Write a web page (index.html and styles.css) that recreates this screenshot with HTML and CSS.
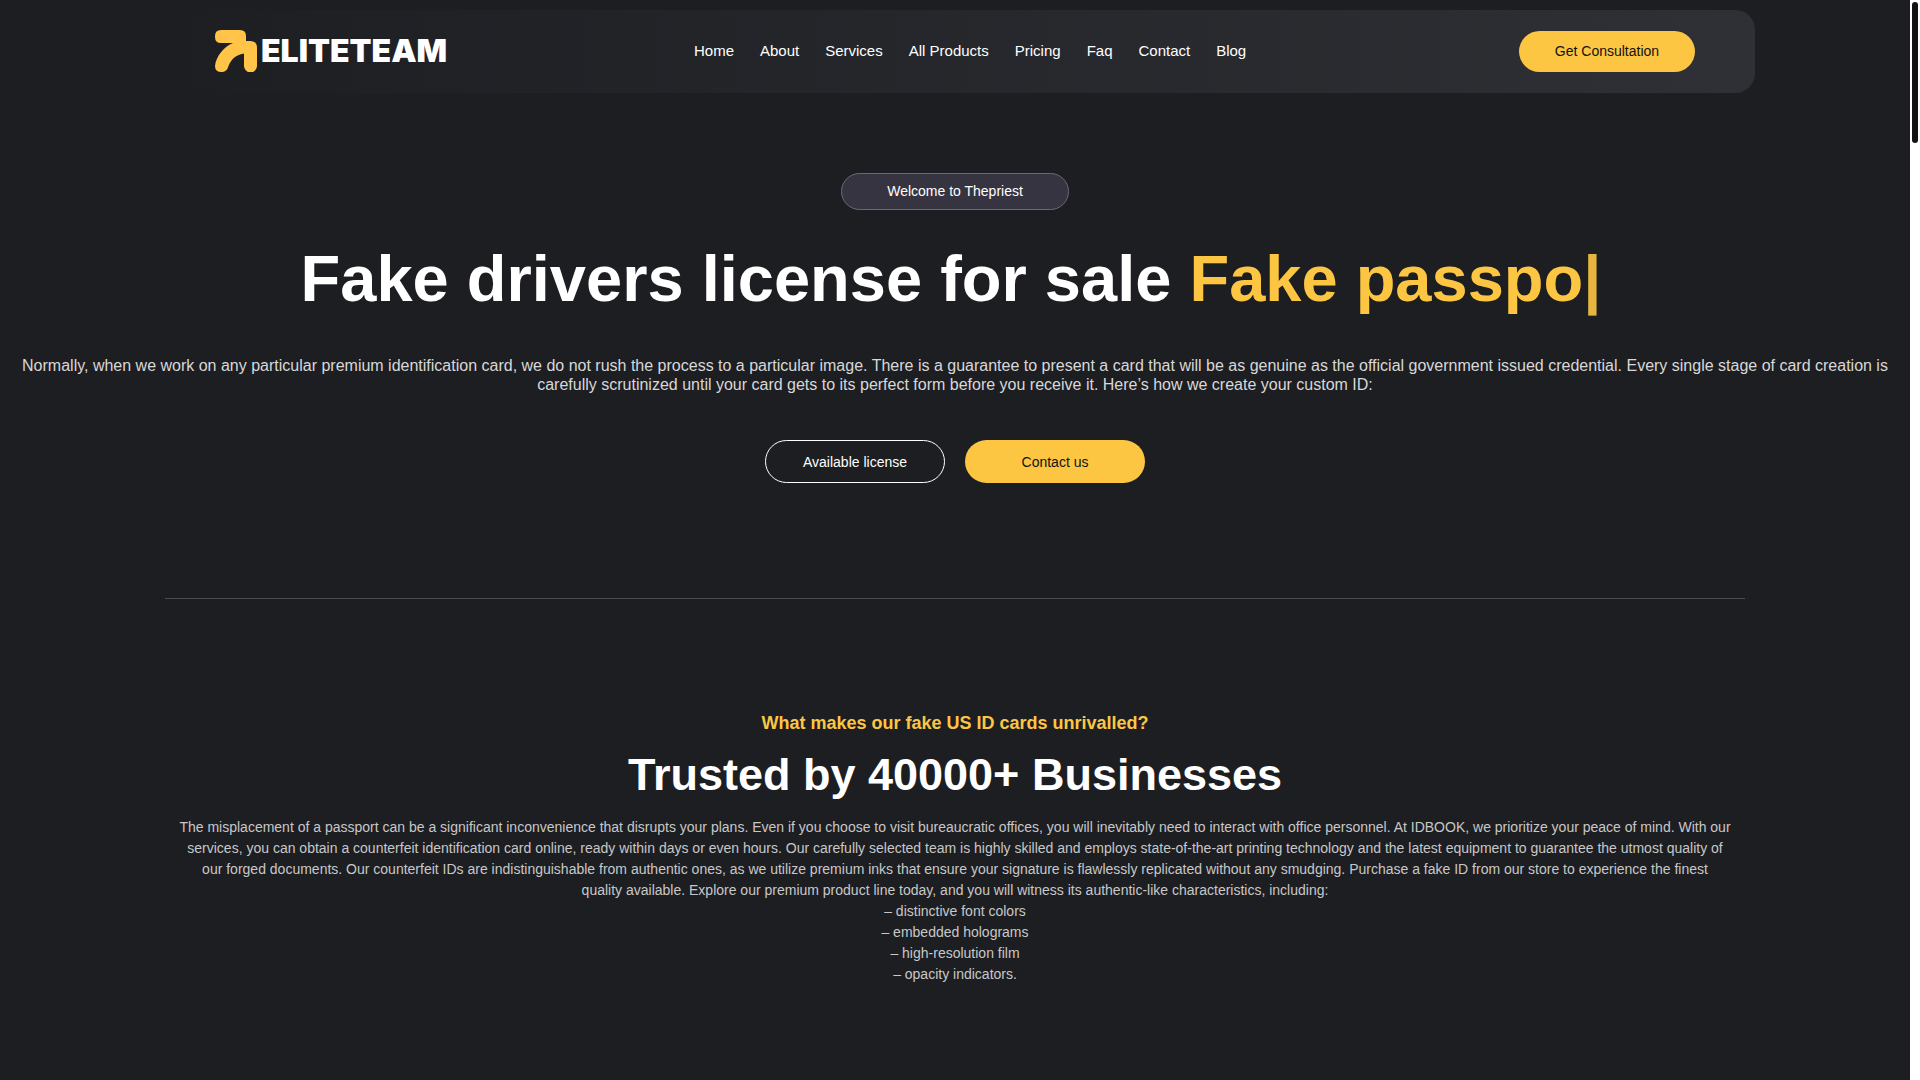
FILE: index.html
```html
<!DOCTYPE html>
<html lang="en">
<head>
    <meta charset="UTF-8">
    <meta name="viewport" content="width=device-width, initial-scale=1.0">
    <title>Eliteteam</title>
    <link rel="stylesheet" href="styles.css">
</head>
<body>
    <div class="page">
        <header class="header">
            <a href="#" class="logo">
                <svg class="logo-mark" viewBox="0 0 42 42" aria-hidden="true">
                    <path d="M6 0H25Q31 0 31 6V11H35Q42 11 42 18V36A6.3 6.3 0 0 1 29 36V23.5C20 25 16 30 13.500 36Q12 42 6.500 42Q0 42 0 36C1 27 8 17 18 13H6Q0 13 0 7V6Q0 0 6 0Z" fill="#ffc448"/>
                </svg>
                <span class="logo-text">ELITETEAM</span>
            </a>
            <nav class="nav">
                <a href="#">Home</a>
                <a href="#">About</a>
                <a href="#">Services</a>
                <a href="#">All Products</a>
                <a href="#">Pricing</a>
                <a href="#">Faq</a>
                <a href="#">Contact</a>
                <a href="#">Blog</a>
            </nav>
            <a href="#" class="btn btn-small">Get Consultation</a>
        </header>

        <main>
            <section class="hero">
                <span class="badge">Welcome to Thepriest</span>
                <h1>Fake drivers license for sale <span class="typed">Fake passpo<span class="cursor">|</span></span></h1>
                <p>Normally, when we work on any particular premium identification card, we do not rush the process to a particular image. There is a guarantee to present a card that will be as genuine as the official government issued credential. Every single stage of card creation is carefully scrutinized until your card gets to its perfect form before you receive it. Here’s how we create your custom ID:</p>
                <div class="hero-buttons">
                    <a href="#" class="btn btn-outline">Available license</a>
                    <a href="#" class="btn">Contact us</a>
                </div>
            </section>

            <section class="trusted">
                <h3>What makes our fake US ID cards unrivalled?</h3>
                <h2>Trusted by 40000+ Businesses</h2>
                <p>The misplacement of a passport can be a significant inconvenience that disrupts your plans. Even if you choose to visit bureaucratic offices, you will inevitably need to interact with office personnel. At IDBOOK, we prioritize your peace of mind. With our services, you can obtain a counterfeit identification card online, ready within days or even hours. Our carefully selected team is highly skilled and employs state-of-the-art printing technology and the latest equipment to guarantee the utmost quality of<br>
                our forged documents. Our counterfeit IDs are indistinguishable from authentic ones, as we utilize premium inks that ensure your signature is flawlessly replicated without any smudging. Purchase a fake ID from our store to experience the finest<br>
                quality available. Explore our premium product line today, and you will witness its authentic-like characteristics, including:<br>
                – distinctive font colors<br>
                – embedded holograms<br>
                – high-resolution film<br>
                – opacity indicators.</p>
            </section>
        </main>
    </div>
    <div class="scroll-track">
        <div class="scroll-thumb"></div>
    </div>
</body>
</html>
```

FILE: styles.css
```css
/* General Styles */
* {
    box-sizing: border-box;
}

body {
    display: flex;
    min-height: 100vh;
    margin: 0;
    background: #1d1e22;
    color: #fff;
    font-family: "Liberation Sans", Arial, sans-serif;
}

a {
    color: inherit;
    text-decoration: none;
}

h1,
h2,
h3,
p {
    margin: 0;
}

.page {
    flex: 1;
    padding-top: 10px;
}

/* Header */
.header {
    display: flex;
    align-items: center;
    justify-content: space-between;
    max-width: 1600px;
    margin: 0 auto;
    padding: 20px 60px 21px;
    border-radius: 20px;
    background: linear-gradient(90deg, #1d1e22, #2f3035);
}

.logo {
    display: flex;
    align-items: center;
    gap: 4px;
    min-width: 232px;
}

.logo-mark {
    width: 42px;
    height: 42px;
}

.logo-text {
    font-family: Inter, sans-serif;
    font-size: 32px;
    font-weight: 900;
    line-height: 40px;
}

.nav {
    display: flex;
    padding-bottom: 2px;
    font-size: 15px;
}

.nav a {
    margin-right: 26px;
}

/* Buttons */
.btn {
    display: flex;
    align-items: center;
    justify-content: center;
    width: 180px;
    height: 43px;
    border-radius: 22px;
    background: #fcc643;
    color: #121212;
    font-size: 14px;
}

.btn-small {
    width: 176px;
    height: 41px;
}

.btn-outline {
    border: 1px solid #fff;
    background: none;
    color: #fff;
}

/* Hero */
.hero {
    display: flex;
    flex-direction: column;
    align-items: center;
    padding: 80px 20px 115px;
    text-align: center;
}

.badge {
    padding: 10px 45px;
    border: 1px solid #6b6977;
    border-radius: 20px;
    background: #363440;
    font-size: 14px;
    line-height: 15px;
}

.hero h1 {
    margin-top: 31px;
    padding-right: 8px;
    font-size: 65px;
    line-height: 76px;
}

.typed {
    color: #fcc643;
}

.cursor {
    opacity: 0.9;
}

.hero p {
    margin-top: 39px;
    color: #d8d8d8;
    font-size: 16px;
    line-height: 19px;
}

.hero-buttons {
    display: flex;
    gap: 20px;
    margin-top: 46px;
}

/* Trusted */
.trusted {
    max-width: 1580px;
    margin: 0 auto;
    padding: 114px 0 90px;
    border-top: 1px solid #4b4b4e;
    text-align: center;
}

.trusted h3 {
    color: #fcc643;
    font-size: 18px;
    line-height: 20px;
}

.trusted h2 {
    margin-top: 16px;
    font-size: 45px;
    line-height: 52px;
}

.trusted p {
    margin-top: 16px;
    color: #c8c8c8;
    font-size: 14px;
    line-height: 21px;
}

/* Scrollbar */
.scroll-track {
    width: 10px;
    padding: 2px;
    background: #fff;
}

.scroll-thumb {
    width: 6px;
    height: 141px;
    border-radius: 3px;
    background: #121212;
}
```
